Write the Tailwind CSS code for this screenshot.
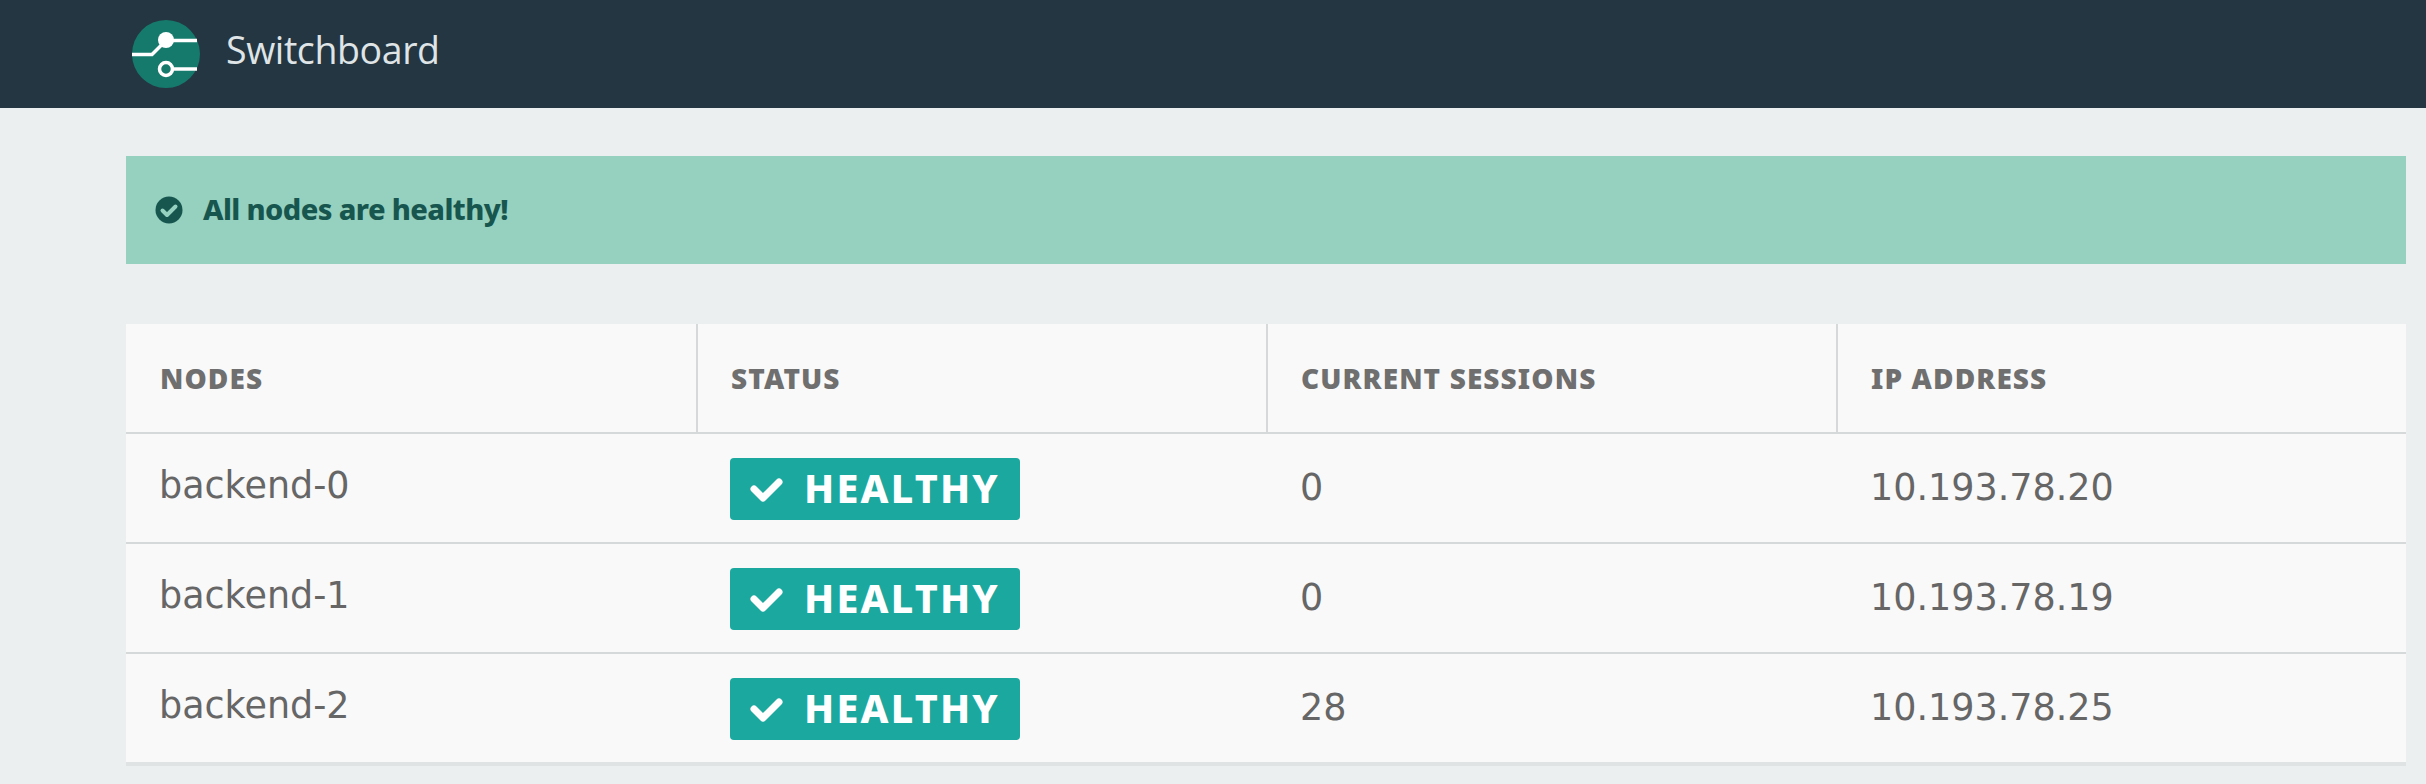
<!DOCTYPE html>
<html lang="en">
<head>
  <meta charset="UTF-8" />
  <title>Switchboard</title>
  <script src="https://cdn.jsdelivr.net/npm/@tailwindcss/browser@4"></script>
</head>
<body class="bg-[#ebeff0] h-[784px] overflow-hidden font-['Noto_Sans',sans-serif]">
  <header class="h-[108px] bg-[#243642] flex items-center pl-[132px]">
    <svg class="w-[68px] h-[68px] block" viewBox="0 0 68 68">
      <circle cx="34" cy="34" r="34" fill="#157a6c" />
      <path d="M0 34.500H20L34 20.500H65" fill="none" stroke="#fff" stroke-width="3.500" />
      <circle cx="34" cy="20" r="8" fill="#fff" />
      <path d="M42 49H65" fill="none" stroke="#fff" stroke-width="3.500" />
      <circle cx="34" cy="49" r="6.500" fill="none" stroke="#fff" stroke-width="3.500" />
    </svg>
    <span class="ml-[26px] pb-[8px] text-[37.500px] font-normal text-[#dfe4e6] font-['Open_Sans',sans-serif] tracking-[-0.4px]">Switchboard</span>
  </header>

  <main class="pl-[126px] pr-[20px] pt-[48px]">
    <div class="h-[108px] bg-[#96d0bf] flex items-center pl-[29px] text-[#17564f]">
      <svg class="w-[28px] h-[28px] block" viewBox="0 0 28 28">
        <circle cx="14" cy="14" r="13.500" fill="currentColor" />
        <path d="M7.500 14.500L12 19L20.500 10.500" fill="none" stroke="#96d0bf" stroke-width="4" stroke-linecap="round" stroke-linejoin="round" />
      </svg>
      <span class="ml-[20px] pb-[3px] text-[29px] font-extrabold tracking-[-0.6px] leading-none">All nodes are healthy!</span>
    </div>

    <div class="mt-[60px] bg-[#f9f9f9] border-b-[4px] border-[#dfe3e3] font-['DejaVu_Sans',sans-serif] text-[#666666] text-[36.500px]">
      <div class="grid grid-cols-4 h-[110px] border-b-2 border-[#d5d9d9] font-['Noto_Sans',sans-serif] text-[28px] font-black text-[#6f6f6f] tracking-[1.100px]">
        <div class="flex items-center pl-[34px]">NODES</div>
        <div class="flex items-center pl-[33px] border-l-2 border-[#d5d9d9]">STATUS</div>
        <div class="flex items-center pl-[33px] border-l-2 border-[#d5d9d9]">CURRENT SESSIONS</div>
        <div class="flex items-center pl-[33px] border-l-2 border-[#d5d9d9]">IP ADDRESS</div>
      </div>

      <div class="grid grid-cols-4 h-[110px] border-b-2 border-[#d5d9d9]">
        <div class="flex items-center pl-[33px] pb-[3px]">backend-0</div>
        <div class="flex items-center pl-[34px] pt-[2px]">
          <span class="flex items-center w-[290px] h-[62px] rounded-[4px] bg-[#1ba89e] text-white pl-[20px] font-['Noto_Sans',sans-serif] font-extrabold text-[39.500px] tracking-[2.200px] leading-none">
            <svg class="w-[34px] h-[28px] block" viewBox="0 0 34 28"><path d="M4 14L13 23L29 7" fill="none" stroke="#fff" stroke-width="7" stroke-linecap="round" stroke-linejoin="round" /></svg>
            <span class="ml-[20px]">HEALTHY</span>
          </span>
        </div>
        <div class="flex items-center pl-[34px]">0</div>
        <div class="flex items-center pl-[34px]">10.193.78.20</div>
      </div>

      <div class="grid grid-cols-4 h-[110px] border-b-2 border-[#d5d9d9]">
        <div class="flex items-center pl-[33px] pb-[3px]">backend-1</div>
        <div class="flex items-center pl-[34px] pt-[2px]">
          <span class="flex items-center w-[290px] h-[62px] rounded-[4px] bg-[#1ba89e] text-white pl-[20px] font-['Noto_Sans',sans-serif] font-extrabold text-[39.500px] tracking-[2.200px] leading-none">
            <svg class="w-[34px] h-[28px] block" viewBox="0 0 34 28"><path d="M4 14L13 23L29 7" fill="none" stroke="#fff" stroke-width="7" stroke-linecap="round" stroke-linejoin="round" /></svg>
            <span class="ml-[20px]">HEALTHY</span>
          </span>
        </div>
        <div class="flex items-center pl-[34px]">0</div>
        <div class="flex items-center pl-[34px]">10.193.78.19</div>
      </div>

      <div class="grid grid-cols-4 h-[108px]">
        <div class="flex items-center pl-[33px] pb-[3px]">backend-2</div>
        <div class="flex items-center pl-[34px] pt-[2px]">
          <span class="flex items-center w-[290px] h-[62px] rounded-[4px] bg-[#1ba89e] text-white pl-[20px] font-['Noto_Sans',sans-serif] font-extrabold text-[39.500px] tracking-[2.200px] leading-none">
            <svg class="w-[34px] h-[28px] block" viewBox="0 0 34 28"><path d="M4 14L13 23L29 7" fill="none" stroke="#fff" stroke-width="7" stroke-linecap="round" stroke-linejoin="round" /></svg>
            <span class="ml-[20px]">HEALTHY</span>
          </span>
        </div>
        <div class="flex items-center pl-[34px]">28</div>
        <div class="flex items-center pl-[34px]">10.193.78.25</div>
      </div>
    </div>
  </main>
</body>
</html>
